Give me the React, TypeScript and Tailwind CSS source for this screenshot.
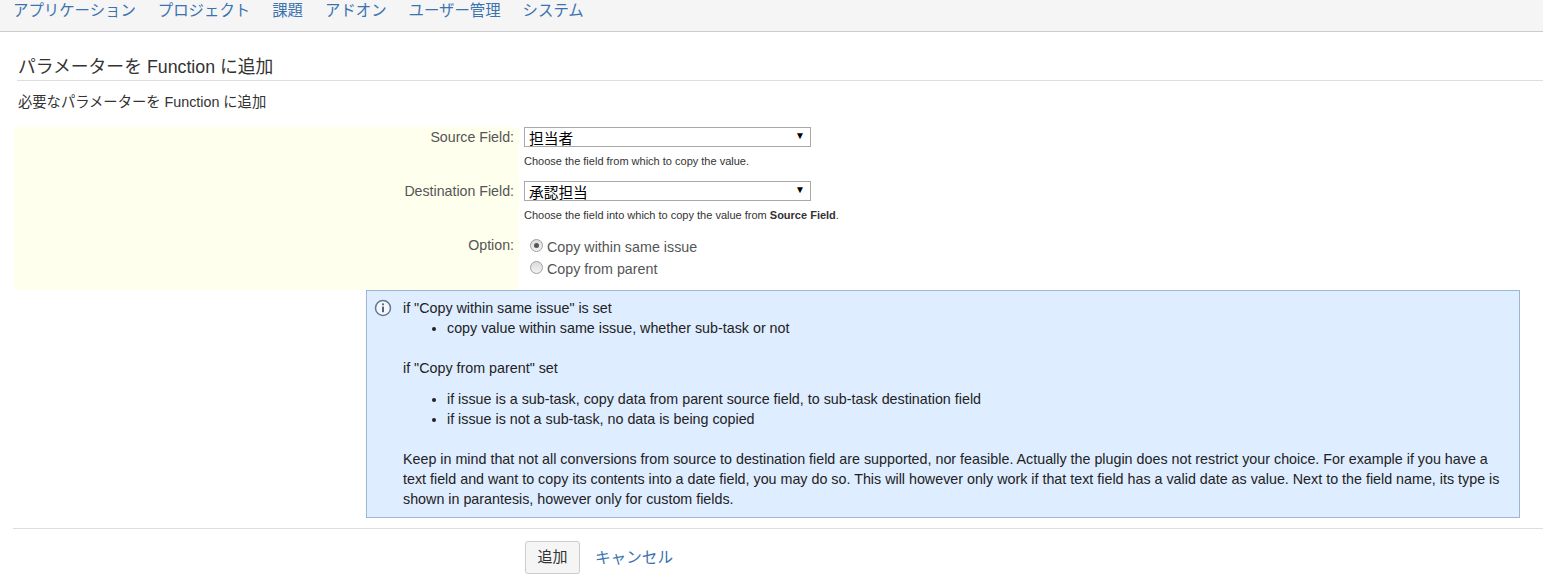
const font = "[font-family:'Liberation_Sans','Noto_Sans_CJK_JP',sans-serif]";

const navItems = ["アプリケーション", "プロジェクト", "課題", "アドオン", "ユーザー管理", "システム"];

const InfoIcon = () => (
  <svg width="18" height="18" viewBox="0 0 18 18" className="shrink-0">
    <circle cx="9" cy="9" r="7.5" fill="#f4f7fb" stroke="#67778c" strokeWidth="1.5" />
    <circle cx="9" cy="5.3" r="1.1" fill="#56667a" />
    <rect x="8" y="7.6" width="2" height="5.6" fill="#56667a" />
  </svg>
);

const Radio = ({ checked }: { checked?: boolean }) => (
  <span className="mb-[3px] flex h-[13px] w-[13px] items-center justify-center rounded-full border border-[#a0a0a0] bg-gradient-to-b from-[#dcdcdc] to-[#f2f2f2]">
    {checked && <span className="h-[5px] w-[5px] rounded-full bg-[#555]" />}
  </span>
);

const SelectBox = ({ value }: { value: string }) => (
  <div className="relative h-[20px] w-[287px] overflow-hidden border border-[#a9a9a9] bg-white pl-[4px] text-[14.7px] leading-[22px] text-black">
    {value}
    <span className="absolute right-[5px] top-[0px] text-[10px] leading-[16px] text-black">▼</span>
  </div>
);

const App = () => {
  return (
    <div className={`${font} min-h-[576px] bg-white text-[14.3px] text-[#333333]`}>
      <nav className="flex h-[32px] items-start gap-[22px] border-b border-[#cccccc] bg-[#f5f5f5] pl-[13px] text-[15.4px] leading-[21px] text-[#3b73af]">
        {navItems.map((item) => (
          <a key={item}>{item}</a>
        ))}
      </nav>

      <h2 className="mt-[22px] ml-[17px] border-b border-[#dddddd] pl-[1px] text-[17.8px] leading-[26px] text-[#333333]">
        パラメーターを Function に追加
      </h2>
      <p className="mt-[11px] ml-[18px] text-[14.3px] leading-[20px]">必要なパラメーターを Function に追加</p>

      <div className="mt-[15px] ml-[14px] flex h-[163px]">
        <div className="flex w-[505px] flex-col items-end bg-[#ffffee] pr-[5px] pt-[1px] text-[14.2px] leading-[18px] text-[#555555]">
          <label>Source Field:</label>
          <label className="mt-[36px]">Destination Field:</label>
          <label className="mt-[36px]">Option:</label>
        </div>
        <div className="pl-[5px]">
          <SelectBox value="担当者" />
          <p className="mt-[6px] text-[11px] leading-[16px] text-[#333333]">Choose the field from which to copy the value.</p>
          <div className="mt-[12px]">
            <SelectBox value="承認担当" />
          </div>
          <p className="mt-[6px] text-[11px] leading-[16px] text-[#333333]">
            Choose the field into which to copy the value from <b>Source Field</b>.
          </p>
          <div className="mt-[14px] flex flex-col gap-[2px] pl-[6px] leading-[20px] text-[#555555]">
            <label className="flex items-center gap-[4px]"><Radio checked />Copy within same issue</label>
            <label className="flex items-center gap-[4px]"><Radio />Copy from parent</label>
          </div>
        </div>
      </div>

      <div className="ml-[366px] flex h-[228px] w-[1154px] gap-[11px] border border-[#9db6d6] bg-[#deedff] pl-[7px] pt-[7px] text-[14.3px] leading-[20px] text-[#222222]">
        <div className="pt-[1px]"><InfoIcon /></div>
        <div className="pr-[12px]">
          <p>if "Copy within same issue" is set</p>
          <ul className="list-disc pl-[44px]">
            <li>copy value within same issue, whether sub-task or not</li>
          </ul>
          <p className="mt-[20px]">if "Copy from parent" set</p>
          <ul className="mt-[11px] list-disc pl-[44px]">
            <li>if issue is a sub-task, copy data from parent source field, to sub-task destination field</li>
            <li>if issue is not a sub-task, no data is being copied</li>
          </ul>
          <p className="mt-[20px]">
            Keep in mind that not all conversions from source to destination field are supported, nor feasible. Actually the plugin does not restrict your choice. For example if you have a text field and want to copy its contents into a date field, you may do so. This will however only work if that text field has a valid date as value. Next to the field name, its type is shown in parantesis, however only for custom fields.
          </p>
        </div>
      </div>

      <div className="mt-[10px] ml-[13px] flex items-center gap-[15px] border-t border-[#dddddd] pl-[512px] pt-[12px]">
        <button className="h-[33px] w-[55px] rounded-[3px] border border-[#cccccc] bg-[#f5f5f5] text-[15px] text-[#333333]">追加</button>
        <a className="text-[15.6px] text-[#3b73af]">キャンセル</a>
      </div>
    </div>
  );
};

export default App;
